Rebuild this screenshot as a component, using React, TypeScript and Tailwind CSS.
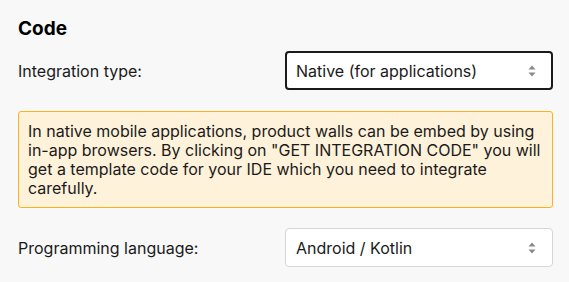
import React from "react";

function Arrows() {
  return (
    <svg width="10" height="16" viewBox="0 0 10 16" className="shrink-0">
      <path d="M5 2.5 L8.5 6.5 L1.5 6.5 Z" fill="#8a8a8a" />
      <path d="M5 13.5 L8.5 9.5 L1.5 9.5 Z" fill="#8a8a8a" />
    </svg>
  );
}

export default function App() {
  return (
    <div
      className="w-[569px] h-[282px] bg-[#f8f8f8] pl-[18px] pr-[16px] pt-[16px] text-[#1a1a1a]"
      style={{ fontFamily: "Inter, 'Noto Sans', sans-serif" }}
    >
      <h2 className="text-[19px] leading-[26px] font-bold text-black">Code</h2>
      <div className="flex items-center mt-[9px]">
        <div className="w-[267px] text-[16px]">Integration type:</div>
        <div className="flex-1 h-[39px] bg-white border-2 border-[#1a1a1a] rounded-[4px] flex items-center justify-between pl-[9px] pr-[14px] text-[16px]">
          <span>Native (for applications)</span>
          <Arrows />
        </div>
      </div>
      <div className="mt-[21px] bg-[#fff2da] border border-[#f9b31b] rounded-[3px] px-[9px] pt-[10px] pb-[9px] text-[16px] leading-[19px]">
        In native mobile applications, product walls can be embed by using in-app browsers. By clicking on "GET INTEGRATION CODE" you will get a template code for your IDE which you need to integrate carefully.
      </div>
      <div className="flex items-center mt-[20px]">
        <div className="w-[267px] text-[16px]">Programming language:</div>
        <div className="flex-1 h-[39px] bg-white border border-[#d6d6d6] rounded-[4px] flex items-center justify-between pl-[10px] pr-[15px] text-[16px]">
          <span>Android / Kotlin</span>
          <Arrows />
        </div>
      </div>
    </div>
  );
}
